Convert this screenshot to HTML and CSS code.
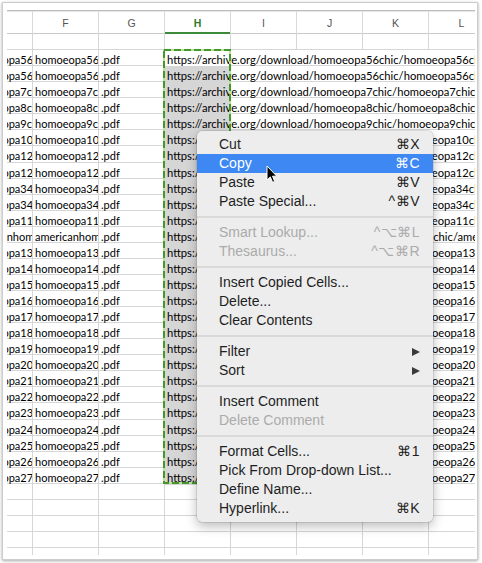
FILE: index.html
```html
<!DOCTYPE html>
<html>
<head>
<meta charset="utf-8">
<link rel="stylesheet" href="styles.css">
</head>
<body>
<div class="frame">
  <div class="sheet">
    <div class="grid">
      <div class="hdr">
        <div class="hc">E</div><div class="hc">F</div><div class="hc">G</div><div class="hc sel">H</div><div class="hc">I</div><div class="hc">J</div><div class="hc">K</div><div class="hc">L</div>
      </div>
      <div class="row empty"><div></div><div></div><div></div><div></div><div></div><div></div><div></div><div></div></div>

      <div class="row data first"><div class="c">homoeopa56chic</div><div class="c">homoeopa56chic</div><div class="c">.pdf</div><div class="c h">https://archive.org/download/homoeopa56chic/homoeopa56chic.pdf</div><div></div></div>
      <div class="row data"><div class="c">homoeopa56chic</div><div class="c">homoeopa56chic</div><div class="c">.pdf</div><div class="c h">https://archive.org/download/homoeopa56chic/homoeopa56chic.pdf</div><div></div></div>
      <div class="row data"><div class="c">homoeopa7chic</div><div class="c">homoeopa7chic</div><div class="c">.pdf</div><div class="c h">https://archive.org/download/homoeopa7chic/homoeopa7chic.pdf</div><div></div></div>
      <div class="row data"><div class="c">homoeopa8chic</div><div class="c">homoeopa8chic</div><div class="c">.pdf</div><div class="c h">https://archive.org/download/homoeopa8chic/homoeopa8chic.pdf</div><div></div></div>
      <div class="row data"><div class="c">homoeopa9chic</div><div class="c">homoeopa9chic</div><div class="c">.pdf</div><div class="c h">https://archive.org/download/homoeopa9chic/homoeopa9chic.pdf</div><div></div></div>
      <div class="row data"><div class="c">homoeopa10chic</div><div class="c">homoeopa10chic</div><div class="c">.pdf</div><div class="c h">https://archive.org/download/homoeopa10chic/homoeopa10chic.pdf</div><div></div></div>
      <div class="row data"><div class="c">homoeopa12chic</div><div class="c">homoeopa12chic</div><div class="c">.pdf</div><div class="c h">https://archive.org/download/homoeopa12chic/homoeopa12chic.pdf</div><div></div></div>
      <div class="row data"><div class="c">homoeopa12chic</div><div class="c">homoeopa12chic</div><div class="c">.pdf</div><div class="c h">https://archive.org/download/homoeopa12chic/homoeopa12chic.pdf</div><div></div></div>
      <div class="row data"><div class="c">homoeopa34chic</div><div class="c">homoeopa34chic</div><div class="c">.pdf</div><div class="c h">https://archive.org/download/homoeopa34chic/homoeopa34chic.pdf</div><div></div></div>
      <div class="row data"><div class="c">homoeopa34chic</div><div class="c">homoeopa34chic</div><div class="c">.pdf</div><div class="c h">https://archive.org/download/homoeopa34chic/homoeopa34chic.pdf</div><div></div></div>
      <div class="row data"><div class="c">homoeopa11chic</div><div class="c">homoeopa11chic</div><div class="c">.pdf</div><div class="c h">https://archive.org/download/homoeopa11chic/homoeopa11chic.pdf</div><div></div></div>
      <div class="row data"><div class="c">americanhomoeopath01chic</div><div class="c">americanhomoeopath01chic</div><div class="c">.pdf</div><div class="c h">https://archive.org/download/americanhomoeopath01chic/americanhomoeopath01chic.pdf</div><div></div></div>
      <div class="row data"><div class="c">homoeopa131chic</div><div class="c">homoeopa131chic</div><div class="c">.pdf</div><div class="c h">https://archive.org/download/homoeopa131chic/homoeopa131chic.pdf</div><div></div></div>
      <div class="row data"><div class="c">homoeopa141chic</div><div class="c">homoeopa141chic</div><div class="c">.pdf</div><div class="c h">https://archive.org/download/homoeopa141chic/homoeopa141chic.pdf</div><div></div></div>
      <div class="row data"><div class="c">homoeopa151chic</div><div class="c">homoeopa151chic</div><div class="c">.pdf</div><div class="c h">https://archive.org/download/homoeopa151chic/homoeopa151chic.pdf</div><div></div></div>
      <div class="row data"><div class="c">homoeopa161chic</div><div class="c">homoeopa161chic</div><div class="c">.pdf</div><div class="c h">https://archive.org/download/homoeopa161chic/homoeopa161chic.pdf</div><div></div></div>
      <div class="row data"><div class="c">homoeopa171chic</div><div class="c">homoeopa171chic</div><div class="c">.pdf</div><div class="c h">https://archive.org/download/homoeopa171chic/homoeopa171chic.pdf</div><div></div></div>
      <div class="row data"><div class="c">homoeopa181chic</div><div class="c">homoeopa181chic</div><div class="c">.pdf</div><div class="c h">https://archive.org/download/homoeopa181chic/homoeopa181chic.pdf</div><div></div></div>
      <div class="row data"><div class="c">homoeopa191chic</div><div class="c">homoeopa191chic</div><div class="c">.pdf</div><div class="c h">https://archive.org/download/homoeopa191chic/homoeopa191chic.pdf</div><div></div></div>
      <div class="row data"><div class="c">homoeopa201chic</div><div class="c">homoeopa201chic</div><div class="c">.pdf</div><div class="c h">https://archive.org/download/homoeopa201chic/homoeopa201chic.pdf</div><div></div></div>
      <div class="row data"><div class="c">homoeopa211chic</div><div class="c">homoeopa211chic</div><div class="c">.pdf</div><div class="c h">https://archive.org/download/homoeopa211chic/homoeopa211chic.pdf</div><div></div></div>
      <div class="row data"><div class="c">homoeopa221chic</div><div class="c">homoeopa221chic</div><div class="c">.pdf</div><div class="c h">https://archive.org/download/homoeopa221chic/homoeopa221chic.pdf</div><div></div></div>
      <div class="row data"><div class="c">homoeopa231chic</div><div class="c">homoeopa231chic</div><div class="c">.pdf</div><div class="c h">https://archive.org/download/homoeopa231chic/homoeopa231chic.pdf</div><div></div></div>
      <div class="row data"><div class="c">homoeopa241chic</div><div class="c">homoeopa241chic</div><div class="c">.pdf</div><div class="c h">https://archive.org/download/homoeopa241chic/homoeopa241chic.pdf</div><div></div></div>
      <div class="row data"><div class="c">homoeopa251chic</div><div class="c">homoeopa251chic</div><div class="c">.pdf</div><div class="c h">https://archive.org/download/homoeopa251chic/homoeopa251chic.pdf</div><div></div></div>
      <div class="row data"><div class="c">homoeopa261chic</div><div class="c">homoeopa261chic</div><div class="c">.pdf</div><div class="c h">https://archive.org/download/homoeopa261chic/homoeopa261chic.pdf</div><div></div></div>
      <div class="row data"><div class="c">homoeopa271chic</div><div class="c">homoeopa271chic</div><div class="c">.pdf</div><div class="c h">https://archive.org/download/homoeopa271chic/homoeopa271chic.pdf</div><div></div></div>

      <div class="row empty"><div></div><div></div><div></div><div></div><div></div><div></div><div></div><div></div></div>
      <div class="row empty"><div></div><div></div><div></div><div></div><div></div><div></div><div></div><div></div></div>
      <div class="row empty"><div></div><div></div><div></div><div></div><div></div><div></div><div></div><div></div></div>
      <div class="row empty"><div></div><div></div><div></div><div></div><div></div><div></div><div></div><div></div></div>
      <div class="row empty"><div></div><div></div><div></div><div></div><div></div><div></div><div></div><div></div></div>
    </div>
    <svg class="ants" width="70" height="438" viewBox="0 0 70 438">
      <rect x="1" y="1" width="66" height="433" fill="none" stroke="#b9df9c" stroke-width="2"/>
      <rect x="1" y="1" width="66" height="433" fill="none" stroke="#44982a" stroke-width="2" stroke-dasharray="7 3"/>
    </svg>
  </div>
</div>

<div class="menu">
  <div class="item"><span>Cut</span><span class="key">⌘X</span></div>
  <div class="item on"><span>Copy</span><span class="key">⌘C</span></div>
  <div class="item"><span>Paste</span><span class="key">⌘V</span></div>
  <div class="item"><span>Paste Special...</span><span class="key">^⌘V</span></div>
  <div class="sep"></div>
  <div class="item off"><span>Smart Lookup...</span><span class="key">^⌥⌘L</span></div>
  <div class="item off"><span>Thesaurus...</span><span class="key">^⌥⌘R</span></div>
  <div class="sep"></div>
  <div class="item"><span>Insert Copied Cells...</span></div>
  <div class="item"><span>Delete...</span></div>
  <div class="item"><span>Clear Contents</span></div>
  <div class="sep"></div>
  <div class="item"><span>Filter</span><span class="arrow"></span></div>
  <div class="item"><span>Sort</span><span class="arrow"></span></div>
  <div class="sep"></div>
  <div class="item"><span>Insert Comment</span></div>
  <div class="item off"><span>Delete Comment</span></div>
  <div class="sep"></div>
  <div class="item"><span>Format Cells...</span><span class="key">⌘1</span></div>
  <div class="item"><span>Pick From Drop-down List...</span></div>
  <div class="item"><span>Define Name...</span></div>
  <div class="item"><span>Hyperlink...</span><span class="key">⌘K</span></div>
</div>

<svg class="cursor" width="13" height="20" viewBox="0 0 13 20">
  <path d="M1 1 L1 15 L4.3 11.9 L6.6 17.3 L8.7 16.4 L6.5 11.2 L10.8 11.2 Z" fill="#000" stroke="#fff" stroke-width="1" stroke-linejoin="round"/>
</svg>
</body>
</html>
```

FILE: styles.css
```css
* { box-sizing: border-box; }
html, body { margin: 0; padding: 0; background: #fff; }
body {
  width: 482px;
  height: 563px;
  overflow: hidden;
  position: relative;
  font-family: Lato, "Liberation Sans", sans-serif;
  color: #000;
}

.frame {
  margin: 2px 0 0 2px;
  width: 476px;
  height: 558px;
  border: 1px solid #cdcdcd;
  box-shadow: 0 1px 3px rgba(0, 0, 0, 0.35);
  padding: 7px 2px 0 4px;
  background: #fff;
}

.sheet {
  width: 468px;
  height: 545px;
  overflow: hidden;
  position: relative;
}

.grid {
  margin-left: -40px;
  width: 528px;
}

.hdr {
  display: grid;
  grid-template-columns: repeat(8, 66px);
  height: 24px;
  border-top: 1px solid #bdbdbd;
  border-bottom: 1px solid #c9c9c9;
  box-shadow: inset 0 1px 0 #e6e6e6;
}
.hc {
  border-right: 1px solid #d9d9d9;
  text-align: center;
  font-family: "Liberation Sans", Arial, sans-serif;
  font-size: 10.5px;
  line-height: 22px;
  padding-top: 1px;
  color: #555;
}
.hc.sel {
  color: #2f7a2f;
  font-weight: bold;
  box-shadow: inset 0 -2px 0 #3d8a3a;
}

.row {
  display: grid;
  height: 16.0625px;
  border-bottom: 1px solid #d6d6d6;
}
.row.empty { grid-template-columns: repeat(8, 66px); }
.row.empty > div { border-right: 1px solid #d6d6d6; }
.row.data { grid-template-columns: 66px 66px 66px 66px 1fr; }

.c {
  border-right: 1px solid #d6d6d6;
  padding: 2px 0 0 2px;
  font-size: 11px;
  line-height: 15px;
  white-space: nowrap;
  overflow-x: clip;
  overflow-y: visible;
}
.c.h {
  border-right: none;
  overflow: visible;
  font-size: 11.2px;
  background: #d6d6d6;
}
.row.first .c.h { background: #fff; }

.ants {
  position: absolute;
  left: 156px;
  top: 39px;
}

.menu {
  position: absolute;
  left: 197px;
  top: 131px;
  width: 236px;
  padding: 4px 0;
  background: #ededed;
  border-radius: 5px;
  box-shadow: 0 0 0 0.5px rgba(0, 0, 0, 0.18), 0 4px 12px rgba(0, 0, 0, 0.28);
  font-family: "Liberation Sans", Arial, sans-serif;
  font-size: 14px;
  color: #1e1e1e;
}
.item {
  display: flex;
  justify-content: space-between;
  align-items: center;
  height: 19px;
  line-height: 19px;
  padding: 0 13px 0 22px;
}
.item.on { background: #3d88f3; color: #fff; }
.item.off { color: #ababab; }
.key { letter-spacing: 0.5px; }
.arrow {
  width: 0;
  height: 0;
  border-left: 8px solid #3a3a3a;
  border-top: 4.5px solid transparent;
  border-bottom: 4.5px solid transparent;
}
.sep {
  height: 2px;
  margin: 5px 0;
  background: #d9d9d9;
}

.cursor {
  position: absolute;
  left: 266px;
  top: 165px;
}
```
